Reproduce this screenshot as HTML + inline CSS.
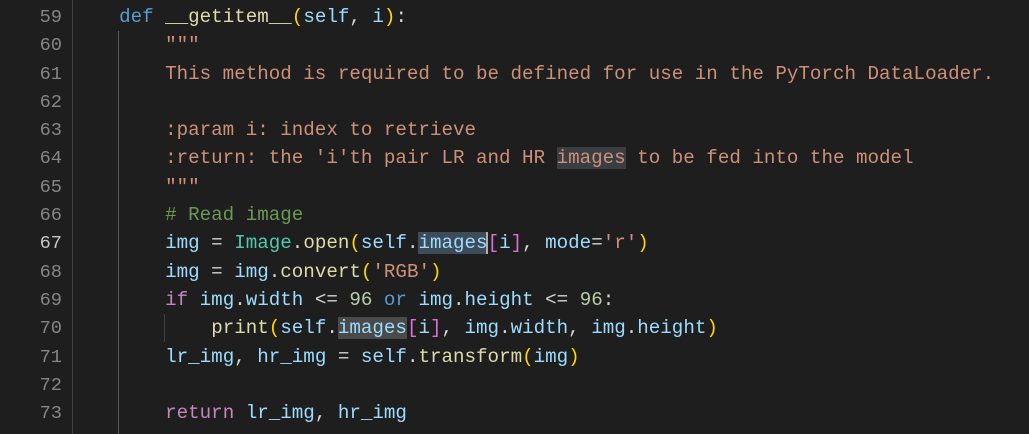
<!DOCTYPE html>
<html><head><style>
body{margin:0;width:1029px;height:434px;background:#1e1e1e;overflow:hidden;position:relative;font-family:"Liberation Mono",monospace;font-size:19.2px}
.ln{position:absolute;left:0;width:62px;text-align:right;color:#858585;font-size:18.7px}
.c{position:absolute;left:73px;color:#d4d4d4}
.r{height:28.3px;line-height:28.3px;white-space:pre}
.g{position:absolute;width:1px;background:#404040}
.k{color:#569cd6}.f{color:#dcdcaa}.p{color:#ffd700}.v{color:#9cdcfe}.s{color:#ce9178}.cm{color:#6a9955}.t{color:#4ec9b0}.n{color:#b5cea8}.kw{color:#c586c0}.b{color:#da70d6}
.h{background:#3a3d41}.hs{background:#3e4b58}
</style></head><body>
<div class="g" style="left:72px;top:0;height:434px"></div>
<div class="g" style="left:118px;top:31px;height:403px;background:#585858"></div>
<div class="g" style="left:164px;top:314px;height:28px"></div>
<div class="ln" style="top:3px"><div class="r">59</div><div class="r">60</div><div class="r">61</div><div class="r">62</div><div class="r">63</div><div class="r">64</div><div class="r">65</div><div class="r">66</div><div class="r" style="color:#c6c6c6">67</div><div class="r">68</div><div class="r">69</div><div class="r">70</div><div class="r">71</div><div class="r">72</div><div class="r">73</div></div>
<div class="c" style="top:3px"><div class="r">    <span class="k">def</span> <span class="f">__getitem__</span><span class="p">(</span><span class="v">self</span>, <span class="v">i</span><span class="p">)</span>:</div><div class="r s">        """</div><div class="r s">        This method is required to be defined for use in the PyTorch DataLoader.</div><div class="r"> </div><div class="r s">        :param i: index to retrieve</div><div class="r s">        :return: the 'i'th pair LR and HR <span class="h">images</span> to be fed into the model</div><div class="r s">        """</div><div class="r cm">        # Read image</div><div class="r">        <span class="v">img</span> = <span class="t">Image</span>.<span class="f">open</span><span class="p">(</span><span class="v">self</span>.<span class="v hs">images</span><span style="border-left:2px solid #aeafad;margin-left:-2px"></span><span class="b">[</span><span class="v">i</span><span class="b">]</span>, <span class="v">mode</span>=<span class="s">'r'</span><span class="p">)</span></div><div class="r">        <span class="v">img</span> = <span class="v">img</span>.<span class="f">convert</span><span class="p">(</span><span class="s">'RGB'</span><span class="p">)</span></div><div class="r">        <span class="kw">if</span> <span class="v">img</span>.<span class="v">width</span> &lt;= <span class="n">96</span> <span class="k">or</span> <span class="v">img</span>.<span class="v">height</span> &lt;= <span class="n">96</span>:</div><div class="r">            <span class="f">print</span><span class="p">(</span><span class="v">self</span>.<span class="v" style="background:#4a4a4a">images</span><span class="b">[</span><span class="v">i</span><span class="b">]</span>, <span class="v">img</span>.<span class="v">width</span>, <span class="v">img</span>.<span class="v">height</span><span class="p">)</span></div><div class="r">        <span class="v">lr_img</span>, <span class="v">hr_img</span> = <span class="v">self</span>.<span class="f">transform</span><span class="p">(</span><span class="v">img</span><span class="p">)</span></div><div class="r"> </div><div class="r">        <span class="kw">return</span> <span class="v">lr_img</span>, <span class="v">hr_img</span></div></div>
</body></html>
